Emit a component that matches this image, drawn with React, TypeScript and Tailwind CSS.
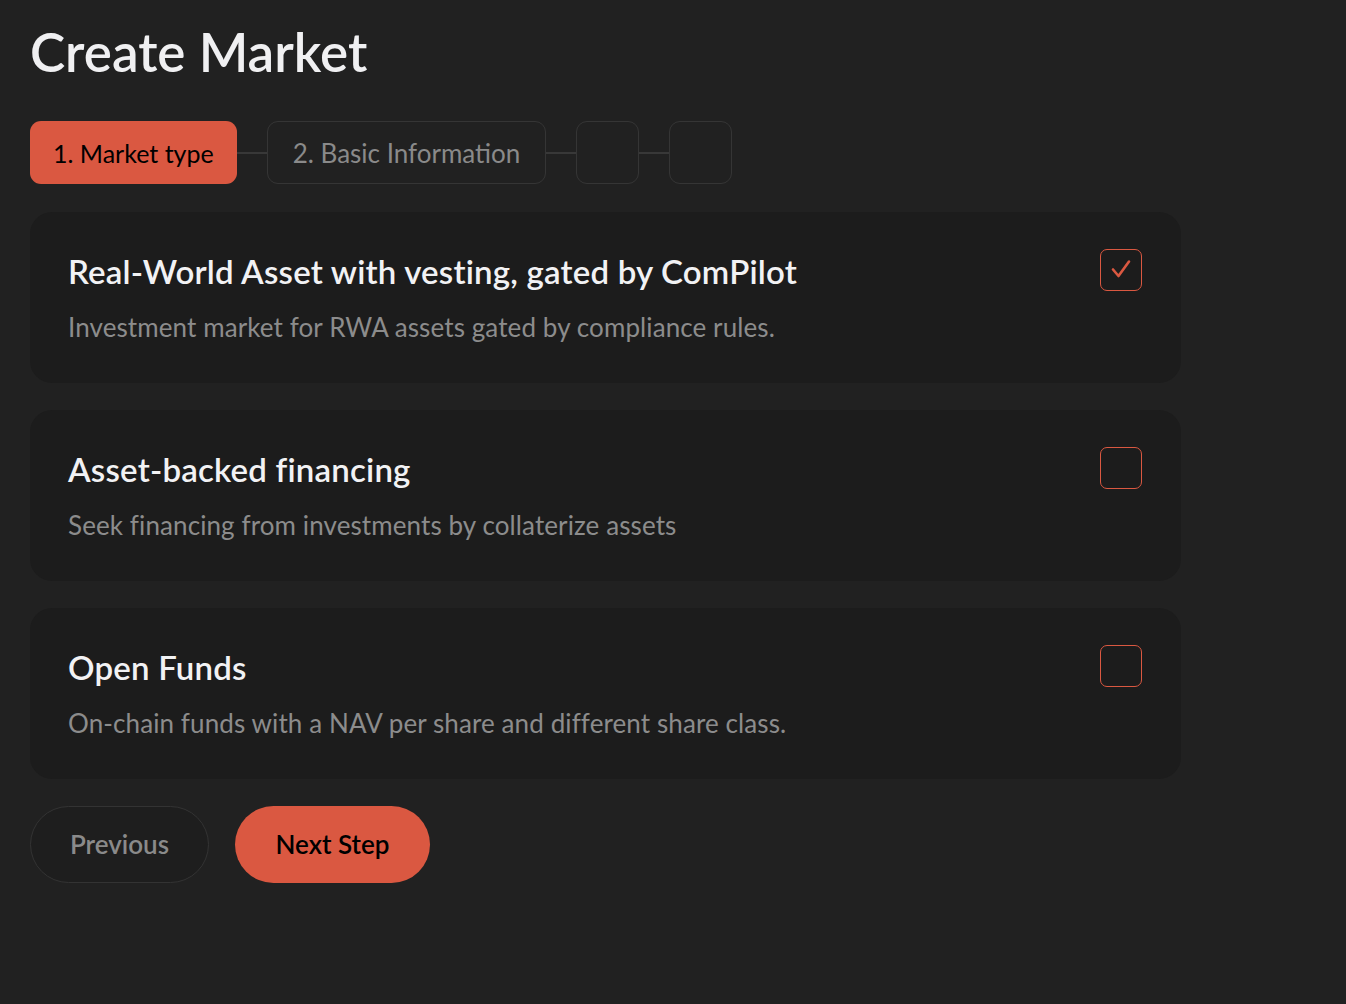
import React, { useState } from 'react';

const options = [
  {
    id: 'rwa',
    title: 'Real-World Asset with vesting, gated by ComPilot',
    description: 'Investment market for RWA assets gated by compliance rules.',
  },
  {
    id: 'abf',
    title: 'Asset-backed financing',
    description: 'Seek financing from investments by collaterize assets',
  },
  {
    id: 'funds',
    title: 'Open Funds',
    description: 'On-chain funds with a NAV per share and different share class.',
  },
];

const Connector = () => <div className="h-[2px] w-[30px] bg-[#383838]" />;

const App: React.FC = () => {
  const [selected, setSelected] = useState('rwa');

  return (
    <div className="min-h-[1004px] w-full bg-[#212121] px-[30px] pt-[21px] font-['Lato',sans-serif]">
      <h1 className="text-[53px] font-semibold leading-[62px] text-[#f0f0f2]">Create Market</h1>

      {/* steps */}
      <div className="mt-[38px] flex items-center">
        <div className="flex h-[63px] items-center rounded-[11px] bg-[#da5841] px-[23px] pt-[2px] text-[25px] text-black">
          1. Market type
        </div>
        <Connector />
        <div className="flex h-[63px] items-center rounded-[11px] border border-[#353535] px-[25px] pt-[2px] text-[26px] text-[#8a8a8a]">
          2. Basic Information
        </div>
        <Connector />
        <div className="h-[63px] w-[63px] rounded-[11px] border border-[#353535]" />
        <Connector />
        <div className="h-[63px] w-[63px] rounded-[11px] border border-[#353535]" />
      </div>

      <div className="mt-[28px] flex w-[1151px] flex-col gap-[27px]">
        {options.map((o) => {
          const active = selected === o.id;
          return (
            <div
              key={o.id}
              onClick={() => setSelected(o.id)}
              className="flex h-[171px] cursor-pointer items-start justify-between rounded-[22px] bg-[#1c1c1c] pl-[38px] pr-[39px] pt-[37px]"
            >
              <div>
                <div className="text-[33px] font-semibold leading-[44px] tracking-[0.2px] text-[#f2f2f4]">{o.title}</div>
                <div className="mt-[17px] text-[26px] leading-[34px] tracking-[0.1px] text-[#8c8c8c]">{o.description}</div>
              </div>
              <div className="h-[42px] w-[42px] shrink-0 rounded-[7px] border-[1.5px] border-[#da5841]">
                {active && (
                  <svg width="39" height="39" viewBox="0 0 39 39" fill="none">
                    <path d="M12 19.5 L17.5 26 L28 11.5" stroke="#da5841" strokeWidth="2.6" strokeLinecap="round" strokeLinejoin="round" />
                  </svg>
                )}
              </div>
            </div>
          );
        })}
      </div>

      <div className="mt-[27px] flex gap-[26px]">
        <button className="h-[77px] w-[179px] rounded-full border border-[#333333] bg-[#1e1e1e] text-[26px] font-semibold text-[#8a8a8a]">
          Previous
        </button>
        <button className="h-[77px] w-[195px] rounded-full bg-[#da5841] text-[26px] font-semibold text-black">
          Next Step
        </button>
      </div>
    </div>
  );
};

export default App;
